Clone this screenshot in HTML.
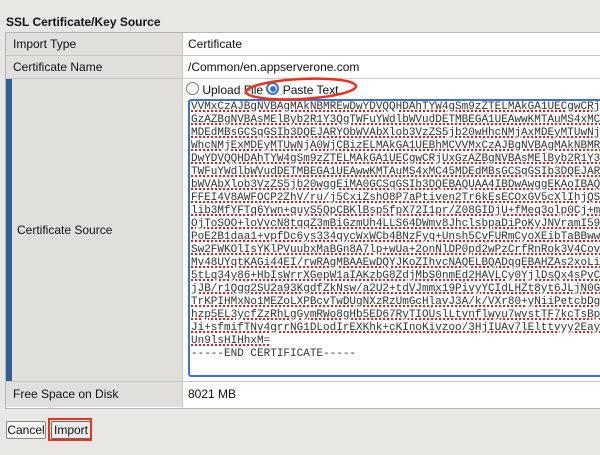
<!DOCTYPE html>
<html><head><meta charset="utf-8"><style>
html,body{margin:0;padding:0;width:600px;height:455px;overflow:hidden;background:#e8e7e4;font-family:"Liberation Sans",Arial,sans-serif;font-size:12px;color:#111;position:relative}
.title{position:absolute;left:6px;top:15px;font-weight:bold;font-size:12px}
.tbl{position:absolute;left:5px;top:32px;width:600px;height:375px;border:1px solid #b8b6b2;border-right:none;background:#fff}
.lab{position:absolute;left:0;width:177px;background:#e1dfdc;border-right:1px solid #c9c7c3;padding-left:7px;box-sizing:border-box}
.val{position:absolute;left:177px;right:0;background:#fff}
.row{position:absolute;left:0;right:0;border-bottom:1px solid #c9c7c3}
.txt{position:absolute;line-height:14px}
.ta{position:absolute;left:182px;top:66px;width:430px;height:278px;border:2px solid #3a73d6;border-radius:3px;box-sizing:border-box;background:#fff;overflow:hidden}
.ta pre{margin:0;padding:0 0 0 1px;font-family:"Liberation Mono",monospace;font-size:11px;line-height:13px;color:#333}
.u{text-decoration:underline dotted #e02020;text-decoration-thickness:2px;text-underline-offset:1px}
.btn{position:absolute;top:421px;height:16px;border:1px solid #888;background:#f6f6f6;font-size:12px;line-height:16px;text-align:center;border-radius:2px}
</style></head><body>
<div class="title">SSL Certificate/Key Source</div>
<div class="tbl">
 <div class="row" style="top:0;height:22px"><div class="lab" style="top:0;height:22px"><span class="txt" style="top:4px">Import Type</span></div><div class="val" style="top:0;height:22px"><span class="txt" style="left:5px;top:4px">Certificate</span></div></div>
 <div class="row" style="top:23px;height:22px"><div class="lab" style="top:0;height:22px"><span class="txt" style="top:4px">Certificate Name</span></div><div class="val" style="top:0;height:22px"><span class="txt" style="left:5px;top:4px">/Common/en.appserverone.com</span></div></div>
 <div class="row" style="top:46px;height:302px"><div class="lab" style="top:0;height:302px;border-left:6px solid #2f5f96;padding-left:5px"><span class="txt" style="top:144px">Certificate Source</span></div>
  <div class="val" style="top:0;height:302px">
   <span class="txt" style="left:3px;top:3px;font-size:12px">
   <span style="display:inline-block;width:11px;height:11px;border:1px solid #777;border-radius:50%;vertical-align:-1px;background:#fff"></span> Upload File <span style="display:inline-block;width:9px;height:9px;border:2px solid #3a73d6;border-radius:50%;vertical-align:-1px;background:#fff;position:relative"><span style="position:absolute;left:1.5px;top:1.5px;width:6px;height:6px;border-radius:50%;background:#3a73d6"></span></span> Paste Text</span>
  </div>
 </div>
 <div class="ta"><pre><span class="u">VVMxCzAJBgNVBAgMAkNBMREwDwYDVQQHDAhTYW4gSm9zZTELMAkGA1UECgwCRj</span>
<span class="u">GzAZBgNVBAsMElByb2R1Y3QgTWFuYWdlbWVudDETMBEGA1UEAwwKMTAuMS4xMC</span>
<span class="u">MDEdMBsGCSqGSIb3DQEJARYObWVAbXlob3VzZS5jb20wHhcNMjAxMDEyMTUwNj</span>
<span class="u">WhcNMjExMDEyMTUwNjA0WjCBizELMAkGA1UEBhMCVVMxCzAJBgNVBAgMAkNBMR</span>
<span class="u">DwYDVQQHDAhTYW4gSm9zZTELMAkGA1UECgwCRjUxGzAZBgNVBAsMElByb2R1Y3</span>
<span class="u">TWFuYWdlbWVudDETMBEGA1UEAwwKMTAuMS4xMC45MDEdMBsGCSqGSIb3DQEJAR</span>
<span class="u">bWVAbXlob3VzZS5jb20wggEiMA0GCSqGSIb3DQEBAQUAA4IBDwAwggEKAoIBAQ</span>
<span class="u">FFEI4V8AWFOCP2ZhV/ru/j5CxiZshO8P7aPtiven2Tr6kEsECOxGV5cXlIhjQS</span>
<span class="u">lib3MfYFTq6Ywn+quyS5QpCBKlBsp5fpX72I1pr/Z08GIDjU+fMeq3olp0Cj+m</span>
<span class="u">OjToSOO+loVvcN8tqqZ3mBiGzmUh4LLS64DWmv8JhclsbpaDiPoKyJNVramI59</span>
<span class="u">PoE2B1daa1+vpfDc6ys334qycWxWCb4BNzFyq+Unsh5CvFURmCyoXEibTaBBww</span>
<span class="u">Sw2FWKOlIsYKlPVuubxMaBGn8A7lp+wUa+2onNlDP0pd2wPzCrfRnRok3V4Cov</span>
<span class="u">Mv48UYqtKAGi44EI/rwRAgMBAAEwDQYJKoZIhvcNAQELBQADqgEBAHZAs2xoLi</span>
<span class="u">5tLq34y86+HbIsWrrXGepW1aIAKzbG8ZdjMbS0nmEd2HAVLCy0YjlDsQx4sPvC</span>
<span class="u">jJB/r1Qgg2SU2a93KgdfZkNsw/a2U2+tdVJmmx19PivyYCIdLHZt8yt6JLjN0G</span>
<span class="u">TrKPIHMxNo1MEZoLXPBcvTwDUgNXzRzUmGcHlavJ3A/k/VXr80+yNiiPetcbDg</span>
<span class="u">hzp5EL3ycfZzRhLgGymRWo8gHb5ED67RyTIOUslLtvnflwyu7wvstTF7kcTsBp</span>
<span class="u">Ji+sfmifTNv4grrNG1DLodIrEXKhk+cKInoKivzoo/3HjIUAv7lElttvyy2Eay</span>
<span class="u">Un9lsHIHhxM=</span>
-----END CERTIFICATE-----</pre></div>
 <div class="row" style="top:349px;height:25px;border-bottom:none"><div class="lab" style="top:0;height:25px"><span class="txt" style="top:5px">Free Space on Disk</span></div><div class="val" style="top:0;height:25px"><span class="txt" style="left:5px;top:5px">8021 MB</span></div></div>
</div>
<div class="btn" style="left:6px;width:38px">Cancel</div>
<div class="btn" style="left:51px;width:38px;border-color:#666;background:#ececec">Import</div>
<div style="position:absolute;left:48px;top:418px;width:40px;height:19px;border:2px solid #e8331f"></div>
<svg style="position:absolute;left:0;top:0" width="600" height="455"><ellipse cx="301" cy="89" rx="55" ry="10" fill="none" stroke="#e8331f" stroke-width="2.5" transform="rotate(-3 301 89)"/></svg>
</body></html>
